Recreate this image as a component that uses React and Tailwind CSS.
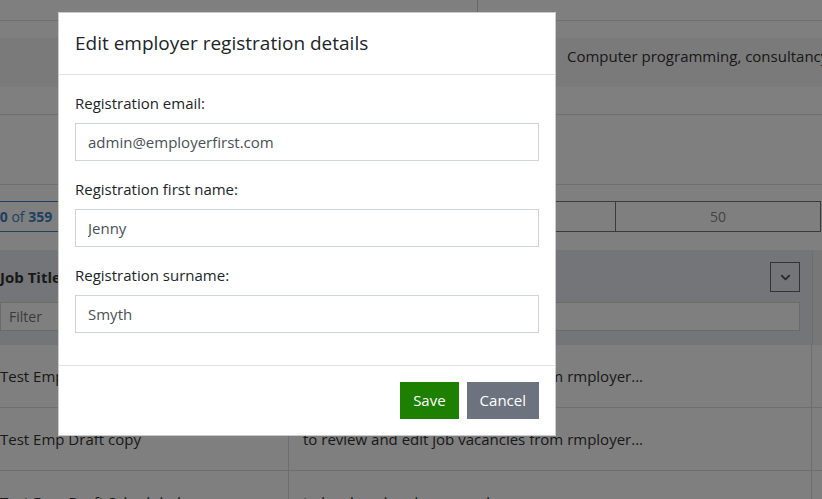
import { ChevronDown } from "lucide-react";

const rows = [
  { title: "Test Emp Draft", desc: "to review and edit job vacancies from rmployer..." },
  { title: "Test Emp Draft copy", desc: "to review and edit job vacancies from rmployer..." },
  { title: "Test Emp Draft Scheduled", desc: "to be closed and reopened..." },
];

function Field({ label, value }) {
  return (
    <div className="mb-4">
      <label className="block h-6 leading-6 mb-2 text-[15px] text-[#212529]">{label}</label>
      <input
        type="text"
        defaultValue={value}
        className="block w-full h-[38px] px-3 border border-[#ced4da] bg-white text-[15px] text-[#495057] outline-none"
      />
    </div>
  );
}

function Page() {
  return (
    <div className="w-[822px] h-[499px] overflow-hidden bg-white text-[#212529] text-[15px]">
      {/* top summary block */}
      <div className="flex h-[21px] border-b border-[#dcdcdc]">
        <div className="w-[478px] border-r border-[#cfcfcf]"></div>
        <div className="flex-1"></div>
      </div>
      <div className="h-[17px]"></div>
      <div className="h-[49px] bg-[#f4f4f4] pt-[7px] pl-[567px] whitespace-nowrap text-[#333]">
        Computer programming, consultancy and related activities
      </div>
      <div className="h-[28px] border-b border-[#dcdcdc]"></div>
      <div className="h-[70px] border-b border-[#dcdcdc]"></div>

      {/* pagination */}
      <div className="flex h-[31px] mt-[16px] text-[14px]">
        <div className="flex-1 border-y border-[#3b82c4] flex items-center whitespace-nowrap overflow-hidden">
          <span className="-ml-[28px] text-[#3b82c4]">
            <b>1 - 50</b> of <b>359</b>
          </span>
        </div>
        <div className="w-[205px] border border-[#777]"></div>
        <div className="w-[205px] border-y border-r border-[#777] flex items-center justify-center text-[#888]">
          50
        </div>
        <div className="w-[1px]"></div>
      </div>

      {/* table */}
      <div className="mt-[18px] flex flex-col">
        <div className="flex h-[95px] bg-[#e8eaf0]">
          <div className="w-[289px] pt-3 pr-3 flex flex-col">
            <div className="flex items-center justify-between h-[30px]">
              <span className="font-bold text-[#333]">Job Title</span>
              <span className="w-[30px] h-[30px] border border-[#666] flex items-center justify-center">
                <ChevronDown size={15} strokeWidth={3} color="#555" />
              </span>
            </div>
            <div className="mt-[10px] h-[29px] border border-[#d6d6d6] bg-white flex items-center px-2 text-[14px] text-[#777]">
              Filter
            </div>
          </div>
          <div className="w-[523px] pt-3 pr-3 pl-[14px] flex flex-col">
            <div className="flex items-center justify-between h-[30px]">
              <span className="font-bold text-[#333]">Description</span>
              <span className="w-[30px] h-[30px] border border-[#666] flex items-center justify-center">
                <ChevronDown size={15} strokeWidth={3} color="#555" />
              </span>
            </div>
            <div className="mt-[10px] h-[29px] border border-[#d6d6d6] bg-white"></div>
          </div>
          <div className="flex-1 border-l border-[#dadce2] bg-[#eeeeee]"></div>
        </div>
        {rows.map((r) => (
          <div key={r.title} className="flex h-[63px] border-b border-[#dcdcdc]">
            <div className="w-[289px] border-r border-[#dcdcdc] pt-[20px] text-[#333] whitespace-nowrap">
              {r.title}
            </div>
            <div className="w-[523px] border-r border-[#dcdcdc] pl-[14px] pt-[20px] text-[#333] whitespace-nowrap">
              {r.desc}
            </div>
            <div className="flex-1"></div>
          </div>
        ))}
      </div>
    </div>
  );
}

export default function App() {
  return (
    <div className="relative w-[822px] h-[499px] overflow-hidden" style={{ fontFamily: '"Open Sans", "Noto Sans", sans-serif' }}>
      <Page />
      <div className="absolute inset-0 bg-black/50"></div>
      <div className="absolute left-[58px] top-[12px] w-[498px] bg-white border border-black/20">
        <div className="px-4 h-[62px] flex items-center border-b border-[#dee2e6]">
          <h5 className="text-[19px] text-[#212529]">Edit employer registration details</h5>
        </div>
        <div className="px-4 pt-4 pb-4 border-b border-[#dee2e6]">
          <Field label="Registration email:" value="admin@employerfirst.com" />
          <Field label="Registration first name:" value="Jenny" />
          <Field label="Registration surname:" value="Smyth" />
        </div>
        <div className="flex justify-end gap-2 px-4 py-[16px]">
          <button className="h-[37px] px-[13px] bg-[#1e8000] text-white text-[15px]">Save</button>
          <button className="h-[37px] px-[13px] bg-[#6c737e] text-white text-[15px]">Cancel</button>
        </div>
      </div>
    </div>
  );
}
